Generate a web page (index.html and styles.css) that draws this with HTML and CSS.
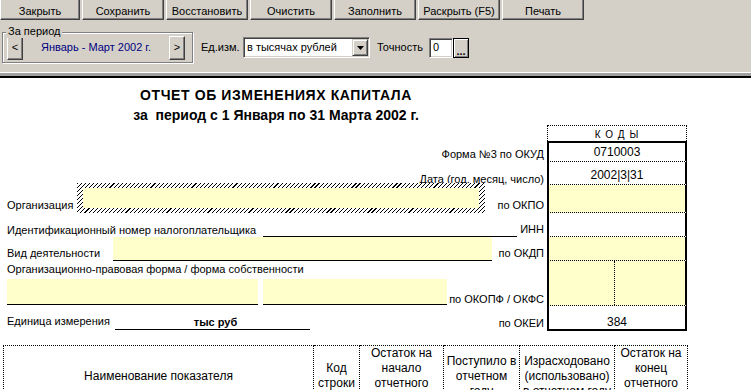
FILE: index.html
```html
<!DOCTYPE html>
<html lang="ru">
<head>
<meta charset="utf-8">
<title>Отчет об изменениях капитала</title>
<link rel="stylesheet" href="styles.css">
</head>
<body>
<div class="toolbar">
  <div class="btnrow">
    <button class="btn first">Закрыть</button>
    <button class="btn">Сохранить</button>
    <button class="btn">Восстановить</button>
    <button class="btn">Очистить</button>
    <button class="btn">Заполнить</button>
    <button class="btn">Раскрыть (F5)</button>
    <button class="btn">Печать</button>
  </div>
  <div class="optrow">
    <div class="group">
      <span class="group-label">За период</span>
      <button class="navbtn">&lt;</button>
      <span class="period">Январь - Март 2002 г.</span>
      <button class="navbtn">&gt;</button>
    </div>
    <span class="unit-lbl">Ед.изм.</span>
    <div class="combo">
      <span class="combo-text">в тысячах рублей</span>
      <span class="combo-btn"><svg width="7" height="4" viewBox="0 0 7 4"><polygon points="0,0 7,0 3.5,4" fill="#000"/></svg></span>
    </div>
    <span class="prec-lbl">Точность</span>
    <div class="edit">0</div>
    <button class="ellipsis">...</button>
  </div>
</div>
<div class="divider"></div>
<div class="sheet">
  <div class="title">
    <div class="t1">ОТЧЕТ ОБ ИЗМЕНЕНИЯХ КАПИТАЛА</div>
    <div class="t2">за&nbsp; период с 1 Января по 31 Марта 2002 г.</div>
  </div>
  <div class="form">
    <div class="left"></div>
    <div class="code-head">К О Д Ы</div>

    <div class="left"><span class="rlbl mb1">Форма №3 по ОКУД</span></div>
    <div class="code first pb2">0710003</div>

    <div class="left"><span class="rlbl mbm1">Дата (год, месяц, число)</span></div>
    <div class="code pb2">2002|3|31</div>

    <div class="left">
      <span class="lead lead-org mb1">Организация</span>
      <div class="hatch"><div class="hatch-in"></div></div>
      <span class="rlbl mb1">по ОКПО</span>
    </div>
    <div class="code yellow"></div>

    <div class="left">
      <span class="lead lead-inn">Идентификационный номер налогоплательщика</span>
      <div class="uline uline-inn"></div>
      <span class="rlbl mb1">ИНН</span>
    </div>
    <div class="code"></div>

    <div class="left">
      <span class="lead lead-vid mb1">Вид деятельности</span>
      <div class="field field-vid"></div>
      <span class="rlbl mb1">по ОКДП</span>
    </div>
    <div class="code yellow"></div>

    <div class="left stack">
      <span class="lead lead-opf">Организационно-правовая форма / форма собственности</span>
      <div class="fields-row">
        <div class="field field-opf1"></div>
        <div class="field field-opf2"></div>
        <span class="rlbl">по ОКОПФ / ОКФС</span>
      </div>
    </div>
    <div class="code split yellow"><div class="half"></div><div></div></div>

    <div class="left">
      <span class="lead lead-ed mb3">Единица измерения</span>
      <div class="uline uline-ed"><b>тыс руб</b></div>
      <span class="rlbl mb1">по ОКЕИ</span>
    </div>
    <div class="code last pb0">384</div>
  </div>

  <table class="grid">
    <colgroup>
      <col class="c1"><col class="c2"><col class="c3"><col class="c4"><col class="c5"><col class="c6">
    </colgroup>
    <tr>
      <th>Наименование показателя</th>
      <th>Код<br>строки</th>
      <th>Остаток на<br>начало<br>отчетного<br>года</th>
      <th>Поступило в<br>отчетном<br>году</th>
      <th>Израсходовано<br>(использовано)<br>в отчетном году</th>
      <th>Остаток на<br>конец<br>отчетного<br>года</th>
    </tr>
  </table>
</div>
</body>
</html>
```

FILE: styles.css
```css
* { box-sizing: border-box; }
html, body { margin: 0; padding: 0; }
body {
  background: #fff;
  font-family: "Liberation Sans", Arial, sans-serif;
  font-size: 11px;
  line-height: 13px;
  color: #000;
  height: 390px;
  overflow: hidden;
}

/* ---------- toolbar ---------- */
.toolbar { height: 72px; background: #d4d0c8; }
.btnrow { display: flex; gap: 2px; }
.btn {
  font: 11px/13px "Liberation Sans", Arial, sans-serif;
  color: #000;
  width: 82px;
  height: 24px;
  margin: -4px 0 0;
  padding: 7px 0 0;
  text-align: center;
  vertical-align: top;
  background: #d4d0c8;
  border: 1px solid;
  border-color: #fff #404040 #404040 #fff;
  box-shadow: inset -1px -1px #808080;
}
.btn.first { width: 80px; }

.optrow { display: flex; align-items: center; margin-top: 12px; padding-left: 2px; }
.group {
  position: relative;
  display: flex;
  align-items: center;
  width: 191px;
  height: 31px;
  padding: 0 7px 0 4px;
  border: 1px solid #808080;
  box-shadow: inset 1px 1px #fff, 1px 1px #fff;
}
.group-label {
  position: absolute;
  top: -8px;
  left: 3px;
  padding: 0 2px;
  background: #d4d0c8;
  line-height: 13px;
}
.navbtn {
  font: 11px/13px "Liberation Sans", Arial, sans-serif;
  width: 16px;
  height: 24px;
  padding: 0;
  background: #d4d0c8;
  color: #000;
  border: 1px solid;
  border-color: #fff #404040 #404040 #fff;
  box-shadow: inset -1px -1px #808080;
}
.period { flex: 1; text-align: center; color: #000080; }
.unit-lbl { width: 42px; margin-left: 8px; }
.combo {
  display: flex;
  align-items: center;
  width: 127px;
  height: 21px;
  padding: 1px;
  background: #fff;
  border: 1px solid;
  border-color: #808080 #fff #fff #808080;
  box-shadow: inset 1px 1px #404040, inset -1px -1px #d4d0c8;
}
.combo-text { flex: 1; padding-left: 2px; }
.combo-btn {
  display: flex;
  align-items: center;
  justify-content: center;
  width: 16px;
  height: 17px;
  background: #d4d0c8;
  border: 1px solid;
  border-color: #d4d0c8 #404040 #404040 #d4d0c8;
  box-shadow: inset 1px 1px #fff, inset -1px -1px #808080;
}
.prec-lbl { width: 52px; margin-left: 7px; }
.edit {
  width: 24px;
  height: 20px;
  padding: 2px 0 0 3px;
  background: #fff;
  border: 1px solid;
  border-color: #808080 #fff #fff #808080;
  box-shadow: inset 1px 1px #404040, inset -1px -1px #d4d0c8;
}
.ellipsis {
  width: 16px;
  height: 20px;
  padding: 6px 0 0;
  font: bold 11px/10px "Liberation Sans", Arial, sans-serif;
  color: #000;
  background: #d4d0c8;
  border: 1px solid #000;
  box-shadow: inset 1px 1px #fff, inset -1px -1px #808080;
}

.divider {
  height: 6px;
  background: #a0a0a0;
  border-top: 1px solid #fff;
  border-bottom: 2px solid #000;
}

/* ---------- sheet ---------- */
.sheet { background: #fff; }
.title {
  width: 552px;
  padding-top: 9px;
  text-align: center;
  font-weight: bold;
  font-size: 14px;
  line-height: 16px;
}
.t1 { letter-spacing: 0.6px; }
.t2 { margin-top: 4px; }

.form {
  display: grid;
  grid-template-columns: 540px 140px;
  grid-template-rows: 16px 21px 23px 28px 24px 24px 45px 25px;
  column-gap: 2px;
  margin: 2px 0 0 5px;
}
.left { display: flex; align-items: flex-end; }
.left.stack { flex-direction: column; align-items: stretch; justify-content: space-between; }
.rlbl { margin-left: auto; padding-right: 1px; white-space: nowrap; }
.lead { padding-left: 2px; white-space: nowrap; flex: none; }
.mb1 { margin-bottom: 1px; }
.mb3 { margin-bottom: 3px; }
.mbm1 { margin-bottom: -1px; }

.lead-org { width: 72px; }
.hatch {
  width: 408px;
  height: 30px;
  margin-top: -2px;
  padding: 5px 6px 5px 6px;
  background: #fff repeating-linear-gradient(135deg, #000 0 0.8px, #fff 0.8px 2.9px);
}
.hatch-in { height: 100%; background: #ffffcc; }

.lead-inn { width: 258px; }
.uline { border-bottom: 1px solid #000; }
.uline-inn { width: 254px; height: 10px; }

.lead-vid { width: 108px; }
.field { background: #ffffcc; border-bottom: 1px solid #000; }
.field-vid { width: 379px; height: 24px; }

.lead-opf { padding-top: 2px; }
.fields-row { display: flex; align-items: flex-end; }
.field-opf1 { width: 251px; height: 26px; margin: 0 5px 1px 2px; }
.field-opf2 { width: 184px; height: 26px; margin-bottom: 1px; }

.lead-ed { width: 110px; }
.uline-ed { width: 195px; margin-bottom: 1px; text-align: center; line-height: 13px; }
.uline-ed b { position: relative; left: 3px; }

.code-head {
  border: 1px dotted #000;
  border-bottom: none;
  text-align: center;
  font-size: 10px;
  line-height: 12px;
  letter-spacing: 1px;
  padding-top: 3px;
}
.code {
  display: flex;
  align-items: flex-end;
  justify-content: center;
  font-size: 12px;
  line-height: 14px;
  border-left: 2px solid #000;
  border-right: 2px solid #000;
  border-bottom: 1px dotted #000;
}
.code.first { border-top: 2px solid #000; }
.code.last { border-bottom: 2px solid #000; }
.pb2 { padding-bottom: 2px; }
.pb0 { padding-bottom: 0; }
.yellow { background: #ffffcc; }
.code.split {
  display: grid;
  grid-template-columns: 66px 1fr;
  align-items: stretch;
  justify-content: stretch;
}
.code.split .half { border-right: 1px dotted #000; }

/* ---------- table ---------- */
.grid {
  margin: 14px 0 0 3px;
  width: 684px;
  border-collapse: collapse;
  table-layout: fixed;
  font-size: 12px;
  line-height: 15px;
}
.grid th {
  height: 61px;
  padding: 0;
  font-weight: normal;
  text-align: center;
  vertical-align: middle;
  border: 1px dotted #000;
}
.c1 { width: 310px; }
.c2 { width: 46px; }
.c3 { width: 84px; }
.c4 { width: 76px; }
.c5 { width: 95px; }
.c6 { width: 73px; }
```
